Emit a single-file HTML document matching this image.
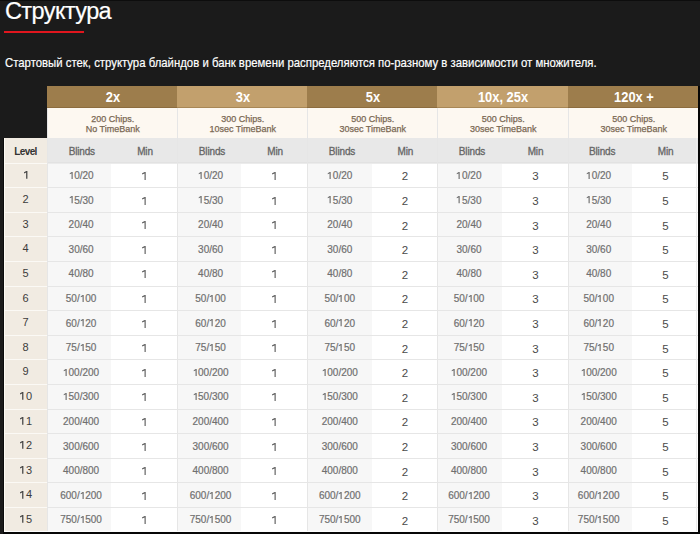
<!DOCTYPE html>
<html><head><meta charset="utf-8"><style>
*{margin:0;padding:0;box-sizing:border-box}
html,body{width:700px;height:534px;overflow:hidden;background:#1b1b1b;font-family:"Liberation Sans",sans-serif}
.a{position:absolute}
.t{position:absolute;white-space:nowrap;text-align:center}
#title{left:5px;top:-2px;font-size:23.5px;line-height:26px;color:#fff;letter-spacing:-0.6px;-webkit-text-stroke:0.2px #fff}
#red{left:4px;top:31px;width:80px;height:2px;background:#e0161e}
#sub{left:5px;top:55px;font-size:13px;line-height:15px;color:#fff;-webkit-text-stroke:0.2px #fff;white-space:nowrap;transform:scaleX(0.874);transform-origin:0 0}
.h1{font-weight:bold;color:#fff;font-size:14px;line-height:16px;transform:scaleX(0.92)}
.h2{color:#7a6853;font-size:9px;line-height:11px;-webkit-text-stroke:0.25px #7a6853}
.h3{color:#666;font-size:10px;line-height:12px;letter-spacing:-0.15px;-webkit-text-stroke:0.3px #666}
.lvh{color:#333;font-weight:bold;font-size:10px;line-height:12px;letter-spacing:-0.6px}
.lv{color:#3c3c3c;font-size:11px;line-height:12px}
.o{width:0.556em;height:0.716em;vertical-align:baseline;fill:#707070}
.bl{color:#707070;-webkit-text-stroke:0.2px #707070;font-size:10px;line-height:12px}
.mn{color:#4a4a4a;font-size:11.5px;line-height:12px}
</style></head>
<body>
<div class="a" id="title">Структура</div>
<div class="a" id="red"></div>
<div class="a" id="sub">Стартовый стек, структура блайндов и банк времени распределяются по-разному в зависимости от множителя.</div>
<div class="a" style="left:4px;top:138px;width:43px;height:394px;background:#f1ebe2;"></div>
<div class="a" style="left:47px;top:86px;width:130px;height:22px;background:#9d7d4c;"></div>
<div class="a" style="left:47px;top:108px;width:130px;height:30px;background:#fdf8f1;"></div>
<div class="a" style="left:47px;top:138px;width:130px;height:25px;background:#e8e8e8;"></div>
<div class="a" style="left:47px;top:163px;width:64px;height:369px;background:#f7f7f7;"></div>
<div class="a" style="left:111px;top:163px;width:66px;height:369px;background:#ffffff;"></div>
<div class="a" style="left:177px;top:86px;width:130px;height:22px;background:#c2a06d;"></div>
<div class="a" style="left:177px;top:108px;width:130px;height:30px;background:#fdf8f1;"></div>
<div class="a" style="left:177px;top:138px;width:130px;height:25px;background:#e8e8e8;"></div>
<div class="a" style="left:177px;top:163px;width:64.4px;height:369px;background:#f7f7f7;"></div>
<div class="a" style="left:241.4px;top:163px;width:65.6px;height:369px;background:#ffffff;"></div>
<div class="a" style="left:307px;top:86px;width:130px;height:22px;background:#9d7d4c;"></div>
<div class="a" style="left:307px;top:108px;width:130px;height:30px;background:#fdf8f1;"></div>
<div class="a" style="left:307px;top:138px;width:130px;height:25px;background:#e8e8e8;"></div>
<div class="a" style="left:307px;top:163px;width:65px;height:369px;background:#f7f7f7;"></div>
<div class="a" style="left:372px;top:163px;width:65px;height:369px;background:#ffffff;"></div>
<div class="a" style="left:437px;top:86px;width:131px;height:22px;background:#c2a06d;"></div>
<div class="a" style="left:437px;top:108px;width:131px;height:30px;background:#fdf8f1;"></div>
<div class="a" style="left:437px;top:138px;width:131px;height:25px;background:#e8e8e8;"></div>
<div class="a" style="left:437px;top:163px;width:65px;height:369px;background:#f7f7f7;"></div>
<div class="a" style="left:502px;top:163px;width:66px;height:369px;background:#ffffff;"></div>
<div class="a" style="left:568px;top:86px;width:130px;height:22px;background:#9d7d4c;"></div>
<div class="a" style="left:568px;top:108px;width:130px;height:30px;background:#fdf8f1;"></div>
<div class="a" style="left:568px;top:138px;width:130px;height:25px;background:#e8e8e8;"></div>
<div class="a" style="left:568px;top:163px;width:64px;height:369px;background:#f7f7f7;"></div>
<div class="a" style="left:632px;top:163px;width:66px;height:369px;background:#ffffff;"></div>
<div class="a" style="left:47px;top:107px;width:651px;height:1px;background:rgba(90,60,20,0.25);"></div>
<div class="a" style="left:47px;top:162px;width:651px;height:1px;background:#e2e2e2;"></div>
<div class="a" style="left:47px;top:163px;width:651px;height:1px;background:#ebebeb;"></div>
<div class="a" style="left:4px;top:162.5px;width:43px;height:1px;background:#fbf9f5;"></div>
<div class="a" style="left:4px;top:187.1px;width:43px;height:1px;background:#fbf9f5;"></div>
<div class="a" style="left:47px;top:187.1px;width:651px;height:1px;background:#e6e6e6;"></div>
<div class="a" style="left:4px;top:211.7px;width:43px;height:1px;background:#fbf9f5;"></div>
<div class="a" style="left:47px;top:211.7px;width:651px;height:1px;background:#e6e6e6;"></div>
<div class="a" style="left:4px;top:236.3px;width:43px;height:1px;background:#fbf9f5;"></div>
<div class="a" style="left:47px;top:236.3px;width:651px;height:1px;background:#e6e6e6;"></div>
<div class="a" style="left:4px;top:260.9px;width:43px;height:1px;background:#fbf9f5;"></div>
<div class="a" style="left:47px;top:260.9px;width:651px;height:1px;background:#e6e6e6;"></div>
<div class="a" style="left:4px;top:285.5px;width:43px;height:1px;background:#fbf9f5;"></div>
<div class="a" style="left:47px;top:285.5px;width:651px;height:1px;background:#e6e6e6;"></div>
<div class="a" style="left:4px;top:310.1px;width:43px;height:1px;background:#fbf9f5;"></div>
<div class="a" style="left:47px;top:310.1px;width:651px;height:1px;background:#e6e6e6;"></div>
<div class="a" style="left:4px;top:334.7px;width:43px;height:1px;background:#fbf9f5;"></div>
<div class="a" style="left:47px;top:334.7px;width:651px;height:1px;background:#e6e6e6;"></div>
<div class="a" style="left:4px;top:359.3px;width:43px;height:1px;background:#fbf9f5;"></div>
<div class="a" style="left:47px;top:359.3px;width:651px;height:1px;background:#e6e6e6;"></div>
<div class="a" style="left:4px;top:383.9px;width:43px;height:1px;background:#fbf9f5;"></div>
<div class="a" style="left:47px;top:383.9px;width:651px;height:1px;background:#e6e6e6;"></div>
<div class="a" style="left:4px;top:408.5px;width:43px;height:1px;background:#fbf9f5;"></div>
<div class="a" style="left:47px;top:408.5px;width:651px;height:1px;background:#e6e6e6;"></div>
<div class="a" style="left:4px;top:433.1px;width:43px;height:1px;background:#fbf9f5;"></div>
<div class="a" style="left:47px;top:433.1px;width:651px;height:1px;background:#e6e6e6;"></div>
<div class="a" style="left:4px;top:457.7px;width:43px;height:1px;background:#fbf9f5;"></div>
<div class="a" style="left:47px;top:457.7px;width:651px;height:1px;background:#e6e6e6;"></div>
<div class="a" style="left:4px;top:482.3px;width:43px;height:1px;background:#fbf9f5;"></div>
<div class="a" style="left:47px;top:482.3px;width:651px;height:1px;background:#e6e6e6;"></div>
<div class="a" style="left:4px;top:506.9px;width:43px;height:1px;background:#fbf9f5;"></div>
<div class="a" style="left:47px;top:506.9px;width:651px;height:1px;background:#e6e6e6;"></div>
<div class="a" style="left:47px;top:108px;width:1px;height:424px;background:#e6e6e6;"></div>
<div class="a" style="left:177px;top:108px;width:1px;height:424px;background:#e6e6e6;"></div>
<div class="a" style="left:307px;top:108px;width:1px;height:424px;background:#e6e6e6;"></div>
<div class="a" style="left:437px;top:108px;width:1px;height:424px;background:#e6e6e6;"></div>
<div class="a" style="left:568px;top:108px;width:1px;height:424px;background:#e6e6e6;"></div>
<div class="a" style="left:696px;top:138px;width:1px;height:394px;background:#ececec;"></div>
<div class="a" style="left:4px;top:138px;width:1px;height:394px;background:#fdfbf4;"></div>
<div class="a" style="left:4px;top:531px;width:694px;height:1px;background:#fdfdfd;"></div>
<div class="a" style="left:698px;top:86px;width:2px;height:448px;background:#060606;"></div>
<div class="a" style="left:3px;top:532px;width:697px;height:2px;background:#060606;"></div>
<div class="a" style="left:3px;top:138px;width:1px;height:394px;background:#0c0c0c;"></div>
<div class="a" style="left:0px;top:0px;width:700px;height:1px;background:#0d0d0d;"></div>
<div class="t h1" style="left:52.5px;top:88.5px;width:120px">2x</div>
<div class="t h2" style="left:52.7px;top:114px;width:120px">200 Chips.</div>
<div class="t h2" style="left:52.7px;top:124px;width:120px">No TimeBank</div>
<div class="t h3" style="left:49.8px;top:146px;width:64px">Blinds</div>
<div class="t h3" style="left:112px;top:146px;width:66px">Min</div>
<div class="t bl" style="left:49.1px;top:170px;width:64px"><svg class="o" viewBox="0 0 556 716" preserveAspectRatio="none"><path d="M372 0V716H255V150L75 228V124L268 0Z"/></svg>0/20</div>
<svg class="a" style="left:142px;top:171.9px" width="5" height="9" viewBox="0 0 5 9"><path d="M3.7 0V7.9H2.55V1.5L0.1 2.45V1.35L2.75 0Z" fill="#5e5e5e"/></svg>
<div class="t bl" style="left:49.1px;top:194.6px;width:64px"><svg class="o" viewBox="0 0 556 716" preserveAspectRatio="none"><path d="M372 0V716H255V150L75 228V124L268 0Z"/></svg>5/30</div>
<svg class="a" style="left:142px;top:196.5px" width="5" height="9" viewBox="0 0 5 9"><path d="M3.7 0V7.9H2.55V1.5L0.1 2.45V1.35L2.75 0Z" fill="#5e5e5e"/></svg>
<div class="t bl" style="left:49.1px;top:219.2px;width:64px">20/40</div>
<svg class="a" style="left:142px;top:221.1px" width="5" height="9" viewBox="0 0 5 9"><path d="M3.7 0V7.9H2.55V1.5L0.1 2.45V1.35L2.75 0Z" fill="#5e5e5e"/></svg>
<div class="t bl" style="left:49.1px;top:243.8px;width:64px">30/60</div>
<svg class="a" style="left:142px;top:245.7px" width="5" height="9" viewBox="0 0 5 9"><path d="M3.7 0V7.9H2.55V1.5L0.1 2.45V1.35L2.75 0Z" fill="#5e5e5e"/></svg>
<div class="t bl" style="left:49.1px;top:268.4px;width:64px">40/80</div>
<svg class="a" style="left:142px;top:270.3px" width="5" height="9" viewBox="0 0 5 9"><path d="M3.7 0V7.9H2.55V1.5L0.1 2.45V1.35L2.75 0Z" fill="#5e5e5e"/></svg>
<div class="t bl" style="left:49.1px;top:293px;width:64px">50/<svg class="o" viewBox="0 0 556 716" preserveAspectRatio="none"><path d="M372 0V716H255V150L75 228V124L268 0Z"/></svg>00</div>
<svg class="a" style="left:142px;top:294.9px" width="5" height="9" viewBox="0 0 5 9"><path d="M3.7 0V7.9H2.55V1.5L0.1 2.45V1.35L2.75 0Z" fill="#5e5e5e"/></svg>
<div class="t bl" style="left:49.1px;top:317.6px;width:64px">60/<svg class="o" viewBox="0 0 556 716" preserveAspectRatio="none"><path d="M372 0V716H255V150L75 228V124L268 0Z"/></svg>20</div>
<svg class="a" style="left:142px;top:319.5px" width="5" height="9" viewBox="0 0 5 9"><path d="M3.7 0V7.9H2.55V1.5L0.1 2.45V1.35L2.75 0Z" fill="#5e5e5e"/></svg>
<div class="t bl" style="left:49.1px;top:342.2px;width:64px">75/<svg class="o" viewBox="0 0 556 716" preserveAspectRatio="none"><path d="M372 0V716H255V150L75 228V124L268 0Z"/></svg>50</div>
<svg class="a" style="left:142px;top:344.1px" width="5" height="9" viewBox="0 0 5 9"><path d="M3.7 0V7.9H2.55V1.5L0.1 2.45V1.35L2.75 0Z" fill="#5e5e5e"/></svg>
<div class="t bl" style="left:49.1px;top:366.8px;width:64px"><svg class="o" viewBox="0 0 556 716" preserveAspectRatio="none"><path d="M372 0V716H255V150L75 228V124L268 0Z"/></svg>00/200</div>
<svg class="a" style="left:142px;top:368.7px" width="5" height="9" viewBox="0 0 5 9"><path d="M3.7 0V7.9H2.55V1.5L0.1 2.45V1.35L2.75 0Z" fill="#5e5e5e"/></svg>
<div class="t bl" style="left:49.1px;top:391.4px;width:64px"><svg class="o" viewBox="0 0 556 716" preserveAspectRatio="none"><path d="M372 0V716H255V150L75 228V124L268 0Z"/></svg>50/300</div>
<svg class="a" style="left:142px;top:393.3px" width="5" height="9" viewBox="0 0 5 9"><path d="M3.7 0V7.9H2.55V1.5L0.1 2.45V1.35L2.75 0Z" fill="#5e5e5e"/></svg>
<div class="t bl" style="left:49.1px;top:416px;width:64px">200/400</div>
<svg class="a" style="left:142px;top:417.9px" width="5" height="9" viewBox="0 0 5 9"><path d="M3.7 0V7.9H2.55V1.5L0.1 2.45V1.35L2.75 0Z" fill="#5e5e5e"/></svg>
<div class="t bl" style="left:49.1px;top:440.6px;width:64px">300/600</div>
<svg class="a" style="left:142px;top:442.5px" width="5" height="9" viewBox="0 0 5 9"><path d="M3.7 0V7.9H2.55V1.5L0.1 2.45V1.35L2.75 0Z" fill="#5e5e5e"/></svg>
<div class="t bl" style="left:49.1px;top:465.2px;width:64px">400/800</div>
<svg class="a" style="left:142px;top:467.1px" width="5" height="9" viewBox="0 0 5 9"><path d="M3.7 0V7.9H2.55V1.5L0.1 2.45V1.35L2.75 0Z" fill="#5e5e5e"/></svg>
<div class="t bl" style="left:49.1px;top:489.8px;width:64px">600/<svg class="o" viewBox="0 0 556 716" preserveAspectRatio="none"><path d="M372 0V716H255V150L75 228V124L268 0Z"/></svg>200</div>
<svg class="a" style="left:142px;top:491.7px" width="5" height="9" viewBox="0 0 5 9"><path d="M3.7 0V7.9H2.55V1.5L0.1 2.45V1.35L2.75 0Z" fill="#5e5e5e"/></svg>
<div class="t bl" style="left:49.1px;top:514.4px;width:64px">750/<svg class="o" viewBox="0 0 556 716" preserveAspectRatio="none"><path d="M372 0V716H255V150L75 228V124L268 0Z"/></svg>500</div>
<svg class="a" style="left:142px;top:516.3px" width="5" height="9" viewBox="0 0 5 9"><path d="M3.7 0V7.9H2.55V1.5L0.1 2.45V1.35L2.75 0Z" fill="#5e5e5e"/></svg>
<div class="t h1" style="left:182.5px;top:88.5px;width:120px">3x</div>
<div class="t h2" style="left:182.7px;top:114px;width:120px">300 Chips.</div>
<div class="t h2" style="left:182.7px;top:124px;width:120px">10sec TimeBank</div>
<div class="t h3" style="left:180px;top:146px;width:64px">Blinds</div>
<div class="t h3" style="left:242.1px;top:146px;width:66px">Min</div>
<div class="t bl" style="left:178.6px;top:170px;width:64px"><svg class="o" viewBox="0 0 556 716" preserveAspectRatio="none"><path d="M372 0V716H255V150L75 228V124L268 0Z"/></svg>0/20</div>
<svg class="a" style="left:272.2px;top:171.9px" width="5" height="9" viewBox="0 0 5 9"><path d="M3.7 0V7.9H2.55V1.5L0.1 2.45V1.35L2.75 0Z" fill="#5e5e5e"/></svg>
<div class="t bl" style="left:178.6px;top:194.6px;width:64px"><svg class="o" viewBox="0 0 556 716" preserveAspectRatio="none"><path d="M372 0V716H255V150L75 228V124L268 0Z"/></svg>5/30</div>
<svg class="a" style="left:272.2px;top:196.5px" width="5" height="9" viewBox="0 0 5 9"><path d="M3.7 0V7.9H2.55V1.5L0.1 2.45V1.35L2.75 0Z" fill="#5e5e5e"/></svg>
<div class="t bl" style="left:178.6px;top:219.2px;width:64px">20/40</div>
<svg class="a" style="left:272.2px;top:221.1px" width="5" height="9" viewBox="0 0 5 9"><path d="M3.7 0V7.9H2.55V1.5L0.1 2.45V1.35L2.75 0Z" fill="#5e5e5e"/></svg>
<div class="t bl" style="left:178.6px;top:243.8px;width:64px">30/60</div>
<svg class="a" style="left:272.2px;top:245.7px" width="5" height="9" viewBox="0 0 5 9"><path d="M3.7 0V7.9H2.55V1.5L0.1 2.45V1.35L2.75 0Z" fill="#5e5e5e"/></svg>
<div class="t bl" style="left:178.6px;top:268.4px;width:64px">40/80</div>
<svg class="a" style="left:272.2px;top:270.3px" width="5" height="9" viewBox="0 0 5 9"><path d="M3.7 0V7.9H2.55V1.5L0.1 2.45V1.35L2.75 0Z" fill="#5e5e5e"/></svg>
<div class="t bl" style="left:178.6px;top:293px;width:64px">50/<svg class="o" viewBox="0 0 556 716" preserveAspectRatio="none"><path d="M372 0V716H255V150L75 228V124L268 0Z"/></svg>00</div>
<svg class="a" style="left:272.2px;top:294.9px" width="5" height="9" viewBox="0 0 5 9"><path d="M3.7 0V7.9H2.55V1.5L0.1 2.45V1.35L2.75 0Z" fill="#5e5e5e"/></svg>
<div class="t bl" style="left:178.6px;top:317.6px;width:64px">60/<svg class="o" viewBox="0 0 556 716" preserveAspectRatio="none"><path d="M372 0V716H255V150L75 228V124L268 0Z"/></svg>20</div>
<svg class="a" style="left:272.2px;top:319.5px" width="5" height="9" viewBox="0 0 5 9"><path d="M3.7 0V7.9H2.55V1.5L0.1 2.45V1.35L2.75 0Z" fill="#5e5e5e"/></svg>
<div class="t bl" style="left:178.6px;top:342.2px;width:64px">75/<svg class="o" viewBox="0 0 556 716" preserveAspectRatio="none"><path d="M372 0V716H255V150L75 228V124L268 0Z"/></svg>50</div>
<svg class="a" style="left:272.2px;top:344.1px" width="5" height="9" viewBox="0 0 5 9"><path d="M3.7 0V7.9H2.55V1.5L0.1 2.45V1.35L2.75 0Z" fill="#5e5e5e"/></svg>
<div class="t bl" style="left:178.6px;top:366.8px;width:64px"><svg class="o" viewBox="0 0 556 716" preserveAspectRatio="none"><path d="M372 0V716H255V150L75 228V124L268 0Z"/></svg>00/200</div>
<svg class="a" style="left:272.2px;top:368.7px" width="5" height="9" viewBox="0 0 5 9"><path d="M3.7 0V7.9H2.55V1.5L0.1 2.45V1.35L2.75 0Z" fill="#5e5e5e"/></svg>
<div class="t bl" style="left:178.6px;top:391.4px;width:64px"><svg class="o" viewBox="0 0 556 716" preserveAspectRatio="none"><path d="M372 0V716H255V150L75 228V124L268 0Z"/></svg>50/300</div>
<svg class="a" style="left:272.2px;top:393.3px" width="5" height="9" viewBox="0 0 5 9"><path d="M3.7 0V7.9H2.55V1.5L0.1 2.45V1.35L2.75 0Z" fill="#5e5e5e"/></svg>
<div class="t bl" style="left:178.6px;top:416px;width:64px">200/400</div>
<svg class="a" style="left:272.2px;top:417.9px" width="5" height="9" viewBox="0 0 5 9"><path d="M3.7 0V7.9H2.55V1.5L0.1 2.45V1.35L2.75 0Z" fill="#5e5e5e"/></svg>
<div class="t bl" style="left:178.6px;top:440.6px;width:64px">300/600</div>
<svg class="a" style="left:272.2px;top:442.5px" width="5" height="9" viewBox="0 0 5 9"><path d="M3.7 0V7.9H2.55V1.5L0.1 2.45V1.35L2.75 0Z" fill="#5e5e5e"/></svg>
<div class="t bl" style="left:178.6px;top:465.2px;width:64px">400/800</div>
<svg class="a" style="left:272.2px;top:467.1px" width="5" height="9" viewBox="0 0 5 9"><path d="M3.7 0V7.9H2.55V1.5L0.1 2.45V1.35L2.75 0Z" fill="#5e5e5e"/></svg>
<div class="t bl" style="left:178.6px;top:489.8px;width:64px">600/<svg class="o" viewBox="0 0 556 716" preserveAspectRatio="none"><path d="M372 0V716H255V150L75 228V124L268 0Z"/></svg>200</div>
<svg class="a" style="left:272.2px;top:491.7px" width="5" height="9" viewBox="0 0 5 9"><path d="M3.7 0V7.9H2.55V1.5L0.1 2.45V1.35L2.75 0Z" fill="#5e5e5e"/></svg>
<div class="t bl" style="left:178.6px;top:514.4px;width:64px">750/<svg class="o" viewBox="0 0 556 716" preserveAspectRatio="none"><path d="M372 0V716H255V150L75 228V124L268 0Z"/></svg>500</div>
<svg class="a" style="left:272.2px;top:516.3px" width="5" height="9" viewBox="0 0 5 9"><path d="M3.7 0V7.9H2.55V1.5L0.1 2.45V1.35L2.75 0Z" fill="#5e5e5e"/></svg>
<div class="t h1" style="left:312.5px;top:88.5px;width:120px">5x</div>
<div class="t h2" style="left:312.7px;top:114px;width:120px">500 Chips.</div>
<div class="t h2" style="left:312.7px;top:124px;width:120px">30sec TimeBank</div>
<div class="t h3" style="left:310px;top:146px;width:64px">Blinds</div>
<div class="t h3" style="left:372.4px;top:146px;width:66px">Min</div>
<div class="t bl" style="left:307.8px;top:170px;width:64px"><svg class="o" viewBox="0 0 556 716" preserveAspectRatio="none"><path d="M372 0V716H255V150L75 228V124L268 0Z"/></svg>0/20</div>
<div class="t mn" style="left:371.9px;top:170.4px;width:66px">2</div>
<div class="t bl" style="left:307.8px;top:194.6px;width:64px"><svg class="o" viewBox="0 0 556 716" preserveAspectRatio="none"><path d="M372 0V716H255V150L75 228V124L268 0Z"/></svg>5/30</div>
<div class="t mn" style="left:371.9px;top:195px;width:66px">2</div>
<div class="t bl" style="left:307.8px;top:219.2px;width:64px">20/40</div>
<div class="t mn" style="left:371.9px;top:219.6px;width:66px">2</div>
<div class="t bl" style="left:307.8px;top:243.8px;width:64px">30/60</div>
<div class="t mn" style="left:371.9px;top:244.2px;width:66px">2</div>
<div class="t bl" style="left:307.8px;top:268.4px;width:64px">40/80</div>
<div class="t mn" style="left:371.9px;top:268.8px;width:66px">2</div>
<div class="t bl" style="left:307.8px;top:293px;width:64px">50/<svg class="o" viewBox="0 0 556 716" preserveAspectRatio="none"><path d="M372 0V716H255V150L75 228V124L268 0Z"/></svg>00</div>
<div class="t mn" style="left:371.9px;top:293.4px;width:66px">2</div>
<div class="t bl" style="left:307.8px;top:317.6px;width:64px">60/<svg class="o" viewBox="0 0 556 716" preserveAspectRatio="none"><path d="M372 0V716H255V150L75 228V124L268 0Z"/></svg>20</div>
<div class="t mn" style="left:371.9px;top:318px;width:66px">2</div>
<div class="t bl" style="left:307.8px;top:342.2px;width:64px">75/<svg class="o" viewBox="0 0 556 716" preserveAspectRatio="none"><path d="M372 0V716H255V150L75 228V124L268 0Z"/></svg>50</div>
<div class="t mn" style="left:371.9px;top:342.6px;width:66px">2</div>
<div class="t bl" style="left:307.8px;top:366.8px;width:64px"><svg class="o" viewBox="0 0 556 716" preserveAspectRatio="none"><path d="M372 0V716H255V150L75 228V124L268 0Z"/></svg>00/200</div>
<div class="t mn" style="left:371.9px;top:367.2px;width:66px">2</div>
<div class="t bl" style="left:307.8px;top:391.4px;width:64px"><svg class="o" viewBox="0 0 556 716" preserveAspectRatio="none"><path d="M372 0V716H255V150L75 228V124L268 0Z"/></svg>50/300</div>
<div class="t mn" style="left:371.9px;top:391.8px;width:66px">2</div>
<div class="t bl" style="left:307.8px;top:416px;width:64px">200/400</div>
<div class="t mn" style="left:371.9px;top:416.4px;width:66px">2</div>
<div class="t bl" style="left:307.8px;top:440.6px;width:64px">300/600</div>
<div class="t mn" style="left:371.9px;top:441px;width:66px">2</div>
<div class="t bl" style="left:307.8px;top:465.2px;width:64px">400/800</div>
<div class="t mn" style="left:371.9px;top:465.6px;width:66px">2</div>
<div class="t bl" style="left:307.8px;top:489.8px;width:64px">600/<svg class="o" viewBox="0 0 556 716" preserveAspectRatio="none"><path d="M372 0V716H255V150L75 228V124L268 0Z"/></svg>200</div>
<div class="t mn" style="left:371.9px;top:490.2px;width:66px">2</div>
<div class="t bl" style="left:307.8px;top:514.4px;width:64px">750/<svg class="o" viewBox="0 0 556 716" preserveAspectRatio="none"><path d="M372 0V716H255V150L75 228V124L268 0Z"/></svg>500</div>
<div class="t mn" style="left:371.9px;top:514.8px;width:66px">2</div>
<div class="t h1" style="left:443px;top:88.5px;width:120px">10x, 25x</div>
<div class="t h2" style="left:443.2px;top:114px;width:120px">500 Chips.</div>
<div class="t h2" style="left:443.2px;top:124px;width:120px">30sec TimeBank</div>
<div class="t h3" style="left:440px;top:146px;width:64px">Blinds</div>
<div class="t h3" style="left:502.5px;top:146px;width:66px">Min</div>
<div class="t bl" style="left:437px;top:170px;width:64px"><svg class="o" viewBox="0 0 556 716" preserveAspectRatio="none"><path d="M372 0V716H255V150L75 228V124L268 0Z"/></svg>0/20</div>
<div class="t mn" style="left:502.4px;top:170.4px;width:66px">3</div>
<div class="t bl" style="left:437px;top:194.6px;width:64px"><svg class="o" viewBox="0 0 556 716" preserveAspectRatio="none"><path d="M372 0V716H255V150L75 228V124L268 0Z"/></svg>5/30</div>
<div class="t mn" style="left:502.4px;top:195px;width:66px">3</div>
<div class="t bl" style="left:437px;top:219.2px;width:64px">20/40</div>
<div class="t mn" style="left:502.4px;top:219.6px;width:66px">3</div>
<div class="t bl" style="left:437px;top:243.8px;width:64px">30/60</div>
<div class="t mn" style="left:502.4px;top:244.2px;width:66px">3</div>
<div class="t bl" style="left:437px;top:268.4px;width:64px">40/80</div>
<div class="t mn" style="left:502.4px;top:268.8px;width:66px">3</div>
<div class="t bl" style="left:437px;top:293px;width:64px">50/<svg class="o" viewBox="0 0 556 716" preserveAspectRatio="none"><path d="M372 0V716H255V150L75 228V124L268 0Z"/></svg>00</div>
<div class="t mn" style="left:502.4px;top:293.4px;width:66px">3</div>
<div class="t bl" style="left:437px;top:317.6px;width:64px">60/<svg class="o" viewBox="0 0 556 716" preserveAspectRatio="none"><path d="M372 0V716H255V150L75 228V124L268 0Z"/></svg>20</div>
<div class="t mn" style="left:502.4px;top:318px;width:66px">3</div>
<div class="t bl" style="left:437px;top:342.2px;width:64px">75/<svg class="o" viewBox="0 0 556 716" preserveAspectRatio="none"><path d="M372 0V716H255V150L75 228V124L268 0Z"/></svg>50</div>
<div class="t mn" style="left:502.4px;top:342.6px;width:66px">3</div>
<div class="t bl" style="left:437px;top:366.8px;width:64px"><svg class="o" viewBox="0 0 556 716" preserveAspectRatio="none"><path d="M372 0V716H255V150L75 228V124L268 0Z"/></svg>00/200</div>
<div class="t mn" style="left:502.4px;top:367.2px;width:66px">3</div>
<div class="t bl" style="left:437px;top:391.4px;width:64px"><svg class="o" viewBox="0 0 556 716" preserveAspectRatio="none"><path d="M372 0V716H255V150L75 228V124L268 0Z"/></svg>50/300</div>
<div class="t mn" style="left:502.4px;top:391.8px;width:66px">3</div>
<div class="t bl" style="left:437px;top:416px;width:64px">200/400</div>
<div class="t mn" style="left:502.4px;top:416.4px;width:66px">3</div>
<div class="t bl" style="left:437px;top:440.6px;width:64px">300/600</div>
<div class="t mn" style="left:502.4px;top:441px;width:66px">3</div>
<div class="t bl" style="left:437px;top:465.2px;width:64px">400/800</div>
<div class="t mn" style="left:502.4px;top:465.6px;width:66px">3</div>
<div class="t bl" style="left:437px;top:489.8px;width:64px">600/<svg class="o" viewBox="0 0 556 716" preserveAspectRatio="none"><path d="M372 0V716H255V150L75 228V124L268 0Z"/></svg>200</div>
<div class="t mn" style="left:502.4px;top:490.2px;width:66px">3</div>
<div class="t bl" style="left:437px;top:514.4px;width:64px">750/<svg class="o" viewBox="0 0 556 716" preserveAspectRatio="none"><path d="M372 0V716H255V150L75 228V124L268 0Z"/></svg>500</div>
<div class="t mn" style="left:502.4px;top:514.8px;width:66px">3</div>
<div class="t h1" style="left:573.5px;top:88.5px;width:120px">120x +</div>
<div class="t h2" style="left:573.7px;top:114px;width:120px">500 Chips.</div>
<div class="t h2" style="left:573.7px;top:124px;width:120px">30sec TimeBank</div>
<div class="t h3" style="left:570.2px;top:146px;width:64px">Blinds</div>
<div class="t h3" style="left:632.6px;top:146px;width:66px">Min</div>
<div class="t bl" style="left:566.7px;top:170px;width:64px"><svg class="o" viewBox="0 0 556 716" preserveAspectRatio="none"><path d="M372 0V716H255V150L75 228V124L268 0Z"/></svg>0/20</div>
<div class="t mn" style="left:632.4px;top:170.4px;width:66px">5</div>
<div class="t bl" style="left:566.7px;top:194.6px;width:64px"><svg class="o" viewBox="0 0 556 716" preserveAspectRatio="none"><path d="M372 0V716H255V150L75 228V124L268 0Z"/></svg>5/30</div>
<div class="t mn" style="left:632.4px;top:195px;width:66px">5</div>
<div class="t bl" style="left:566.7px;top:219.2px;width:64px">20/40</div>
<div class="t mn" style="left:632.4px;top:219.6px;width:66px">5</div>
<div class="t bl" style="left:566.7px;top:243.8px;width:64px">30/60</div>
<div class="t mn" style="left:632.4px;top:244.2px;width:66px">5</div>
<div class="t bl" style="left:566.7px;top:268.4px;width:64px">40/80</div>
<div class="t mn" style="left:632.4px;top:268.8px;width:66px">5</div>
<div class="t bl" style="left:566.7px;top:293px;width:64px">50/<svg class="o" viewBox="0 0 556 716" preserveAspectRatio="none"><path d="M372 0V716H255V150L75 228V124L268 0Z"/></svg>00</div>
<div class="t mn" style="left:632.4px;top:293.4px;width:66px">5</div>
<div class="t bl" style="left:566.7px;top:317.6px;width:64px">60/<svg class="o" viewBox="0 0 556 716" preserveAspectRatio="none"><path d="M372 0V716H255V150L75 228V124L268 0Z"/></svg>20</div>
<div class="t mn" style="left:632.4px;top:318px;width:66px">5</div>
<div class="t bl" style="left:566.7px;top:342.2px;width:64px">75/<svg class="o" viewBox="0 0 556 716" preserveAspectRatio="none"><path d="M372 0V716H255V150L75 228V124L268 0Z"/></svg>50</div>
<div class="t mn" style="left:632.4px;top:342.6px;width:66px">5</div>
<div class="t bl" style="left:566.7px;top:366.8px;width:64px"><svg class="o" viewBox="0 0 556 716" preserveAspectRatio="none"><path d="M372 0V716H255V150L75 228V124L268 0Z"/></svg>00/200</div>
<div class="t mn" style="left:632.4px;top:367.2px;width:66px">5</div>
<div class="t bl" style="left:566.7px;top:391.4px;width:64px"><svg class="o" viewBox="0 0 556 716" preserveAspectRatio="none"><path d="M372 0V716H255V150L75 228V124L268 0Z"/></svg>50/300</div>
<div class="t mn" style="left:632.4px;top:391.8px;width:66px">5</div>
<div class="t bl" style="left:566.7px;top:416px;width:64px">200/400</div>
<div class="t mn" style="left:632.4px;top:416.4px;width:66px">5</div>
<div class="t bl" style="left:566.7px;top:440.6px;width:64px">300/600</div>
<div class="t mn" style="left:632.4px;top:441px;width:66px">5</div>
<div class="t bl" style="left:566.7px;top:465.2px;width:64px">400/800</div>
<div class="t mn" style="left:632.4px;top:465.6px;width:66px">5</div>
<div class="t bl" style="left:566.7px;top:489.8px;width:64px">600/<svg class="o" viewBox="0 0 556 716" preserveAspectRatio="none"><path d="M372 0V716H255V150L75 228V124L268 0Z"/></svg>200</div>
<div class="t mn" style="left:632.4px;top:490.2px;width:66px">5</div>
<div class="t bl" style="left:566.7px;top:514.4px;width:64px">750/<svg class="o" viewBox="0 0 556 716" preserveAspectRatio="none"><path d="M372 0V716H255V150L75 228V124L268 0Z"/></svg>500</div>
<div class="t mn" style="left:632.4px;top:514.8px;width:66px">5</div>
<div class="t lvh" style="left:4px;top:146px;width:43px">Level</div>
<svg class="a" style="left:23.6px;top:171.1px" width="5" height="9" viewBox="0 0 5 9"><path d="M3.4 0V7.8H2.15V1.5L0.05 2.4V1.3L2.3 0Z" fill="#444"/></svg>
<div class="t lv" style="left:4px;top:193.1px;width:43px">2</div>
<div class="t lv" style="left:4px;top:217.7px;width:43px">3</div>
<div class="t lv" style="left:4px;top:242.3px;width:43px">4</div>
<div class="t lv" style="left:4px;top:266.9px;width:43px">5</div>
<div class="t lv" style="left:4px;top:291.5px;width:43px">6</div>
<div class="t lv" style="left:4px;top:316.1px;width:43px">7</div>
<div class="t lv" style="left:4px;top:340.7px;width:43px">8</div>
<div class="t lv" style="left:4px;top:365.3px;width:43px">9</div>
<svg class="a" style="left:20.2px;top:392.1px" width="5" height="9" viewBox="0 0 5 9"><path d="M3.4 0V7.8H2.15V1.5L0.05 2.4V1.3L2.3 0Z" fill="#444"/></svg>
<div class="t lv" style="left:26px;top:389.9px;text-align:left">0</div>
<svg class="a" style="left:20.2px;top:416.7px" width="5" height="9" viewBox="0 0 5 9"><path d="M3.4 0V7.8H2.15V1.5L0.05 2.4V1.3L2.3 0Z" fill="#444"/></svg>
<div class="t lv" style="left:26px;top:414.5px;text-align:left">1</div>
<svg class="a" style="left:20.2px;top:441.3px" width="5" height="9" viewBox="0 0 5 9"><path d="M3.4 0V7.8H2.15V1.5L0.05 2.4V1.3L2.3 0Z" fill="#444"/></svg>
<div class="t lv" style="left:26px;top:439.1px;text-align:left">2</div>
<svg class="a" style="left:20.2px;top:465.9px" width="5" height="9" viewBox="0 0 5 9"><path d="M3.4 0V7.8H2.15V1.5L0.05 2.4V1.3L2.3 0Z" fill="#444"/></svg>
<div class="t lv" style="left:26px;top:463.7px;text-align:left">3</div>
<svg class="a" style="left:20.2px;top:490.5px" width="5" height="9" viewBox="0 0 5 9"><path d="M3.4 0V7.8H2.15V1.5L0.05 2.4V1.3L2.3 0Z" fill="#444"/></svg>
<div class="t lv" style="left:26px;top:488.3px;text-align:left">4</div>
<svg class="a" style="left:20.2px;top:515.1px" width="5" height="9" viewBox="0 0 5 9"><path d="M3.4 0V7.8H2.15V1.5L0.05 2.4V1.3L2.3 0Z" fill="#444"/></svg>
<div class="t lv" style="left:26px;top:512.9px;text-align:left">5</div>
</body></html>
